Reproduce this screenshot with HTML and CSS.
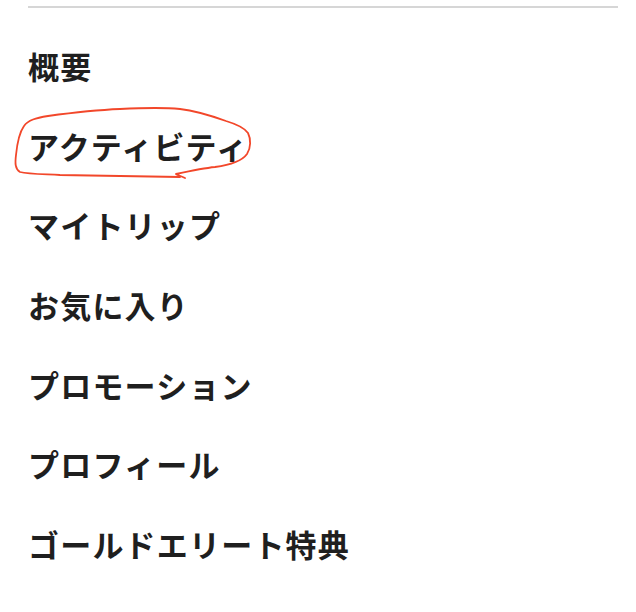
FILE: index.html
```html
<!DOCTYPE html>
<html lang="ja">
<head>
  <meta charset="UTF-8">
  <title>メニュー</title>
  <link rel="stylesheet" href="styles.css">
</head>
<body>

  <div class="menu">
    <ul class="menu-list">
      <li>概要</li>
      <li>アクティビティ</li>
      <li>マイトリップ</li>
      <li>お気に入り</li>
      <li>プロモーション</li>
      <li>プロフィール</li>
      <li>ゴールドエリート特典</li>
    </ul>
  </div>

  <svg class="marca" width="636" height="612" viewBox="0 0 636 612">
    <path d="M185 178 C181 176 177 175 176 174 C190 171 205 168 215 167 C230 165 242 161 247 154 C251 148 251 139 248 133 C244 127 236 124 226 121 C212 116 198 111 180 109 C160 107 140 108 120 109 C95 110 70 113 48 116 C36 118 28 120 24 126 C19 133 17 145 16 155 C15 163 15 169 20 172 C28 174 40 174 60 175 C100 176 140 176 180 177"
      fill="none" stroke="#f2472a" stroke-width="1.8" stroke-linecap="round" stroke-linejoin="round"/>
  </svg>

</body>
</html>
```

FILE: styles.css
```css
body {
  margin: 0;
  background-color: #ffffff;
  font-family: "Noto Sans CJK JP", "Noto Sans", sans-serif;
  color: #1f1f1f;
}
.menu {
  margin: 6px 18px 0 28px;
  border-top: 2px solid #d6d6d6;
  padding-top: 18px;
}
.menu-list {
  list-style: none;
  margin: 0;
  padding: 0;
}
.menu-list li {
  font-size: 31px;
  font-weight: bold;
  line-height: 79.7px;
  height: 79.7px;
  letter-spacing: 1.2px;
}
.marca {
  position: absolute;
  left: 0;
  top: 0;
  pointer-events: none;
}
```
